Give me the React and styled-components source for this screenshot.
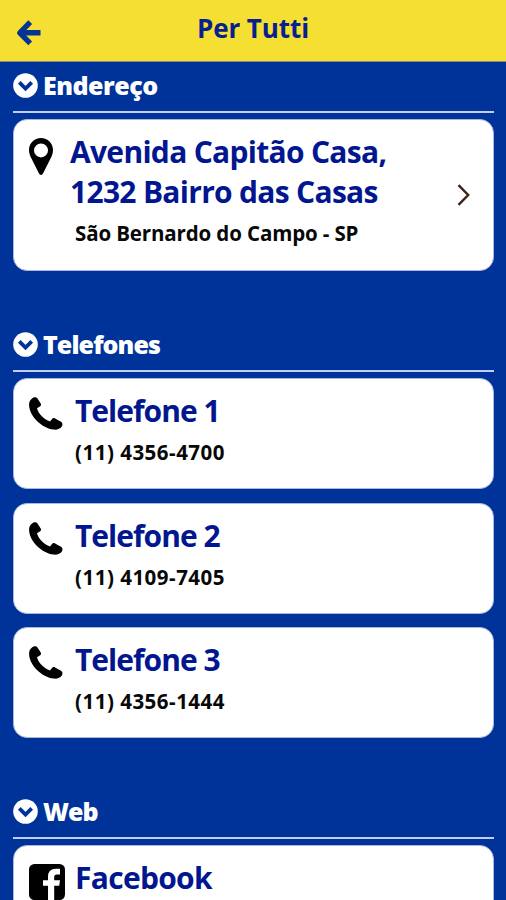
import React from 'react';
import styled, { createGlobalStyle } from 'styled-components';

const GlobalStyle = createGlobalStyle`
  * {
    box-sizing: border-box;
  }
  body {
    margin: 0;
    background-color: #003399;
    font-family: "Open Sans", "Noto Sans", sans-serif;
  }
`

const Aplicativo = styled.div`
  width: 506px;
  height: 900px;
  overflow: hidden;
  background-color: #003399;
`

const Cabecalho = styled.header`
  display: grid;
  grid-template-columns: 50px 1fr 50px;
  height: 62px;
  background-color: #f5df32;
  border-bottom: 1px solid #8b8884;
`

const BotaoVoltar = styled.button`
  display: flex;
  align-items: flex-start;
  padding: 19px 0 0 16px;
  border: none;
  background: none;
`

const TituloPagina = styled.h1`
  margin: 0;
  padding-top: 10px;
  text-align: center;
  font-size: 26px;
  line-height: 36px;
  font-weight: 700;
  letter-spacing: -0.1px;
  color: #06218f;
`

const Secao = styled.section`
  padding: 0 12px 0 13px;
  margin-bottom: 50px;
`

const TopoSecao = styled.div`
  display: flex;
  align-items: flex-start;
  gap: 5px;
  height: 51px;
  padding-top: 11px;
  margin-bottom: 6px;
  border-bottom: 2px solid #c3cdf3;
`

const TituloSecao = styled.h2`
  margin: -5px 0 0;
  font-size: 25px;
  line-height: 34px;
  font-weight: 800;
  white-space: nowrap;
  letter-spacing: ${props => props.$espaco || '0'};
  color: #ffffff;
`

const Lista = styled.div`
  display: flex;
  flex-direction: column;
  gap: 13.5px;
`

const Cartao = styled.article`
  display: flex;
  height: ${props => props.$altura || '111px'};
  padding: 12px 22px 0 15px;
  border: 1px solid #a9b5de;
  border-radius: 14px;
  background-color: #ffffff;
`

const AreaIcone = styled.div`
  flex: none;
  width: ${props => props.$largura || '46px'};
  padding-top: 6px;
`

const Textos = styled.div`
  flex: 1;
`

const TituloCartao = styled.h3`
  margin: 0;
  font-size: 30px;
  line-height: 40px;
  font-weight: 700;
  white-space: nowrap;
  letter-spacing: ${props => props.$espaco || '0'};
  color: #02178f;
`

const Detalhe = styled.p`
  margin: 0;
  padding-left: ${props => props.$recuo || '0'};
  font-size: 20.5px;
  line-height: 42px;
  font-weight: 700;
  white-space: nowrap;
  letter-spacing: ${props => props.$espaco || '0'};
  color: #080808;
`

const AreaSeta = styled.div`
  padding-top: 51px;
`

const Desenho = styled.svg`
  display: block;
`

const IconeVoltar = () => (
  <Desenho width="26" height="28" viewBox="0 0 26 28">
    <path d="M14.2 3.2 L3.8 13.8 L14.2 24.4 M4 13.8 H24.5" fill="none" stroke="#073393" strokeWidth="5.4" strokeLinejoin="round" />
  </Desenho>
)

const IconeSecao = () => (
  <Desenho width="25" height="25" viewBox="0 0 25 25">
    <circle cx="12.5" cy="12.5" r="12.3" fill="#ffffff" />
    <path d="M6.3 9.4 L12.5 15.6 L18.7 9.4" fill="none" stroke="#003399" strokeWidth="3.8" />
  </Desenho>
)

const IconeLocal = () => (
  <Desenho width="24" height="37" viewBox="0 0 24 37">
    <path
      d="M12 0 C5.2 0 0 5.3 0 12 C0 15.2 1 17.5 2.2 20 L10 35.6 C10.8 37.4 13.2 37.4 14 35.6 L21.8 20 C23 17.5 24 15.2 24 12 C24 5.3 18.8 0 12 0 Z M12 5.4 A7 7 0 1 1 12 19.4 A7 7 0 1 1 12 5.4 Z"
      fill="#000000"
      fillRule="evenodd"
    />
  </Desenho>
)

const IconeTelefone = () => (
  <Desenho width="34" height="33" viewBox="0 0 34 33">
    <path
      d="M3 1.6 C4.6 0 7.2 -0.3 8.3 1.2 L11.7 6.6 C12.3 7.7 12.1 8.5 11.2 9.2 L8 11.3 C9.3 16.6 14.8 22.3 21 24.4 L23.4 21.6 C24.2 20.8 25.1 20.8 26.1 21.4 L32.4 25 C33.8 26.1 33.7 28 32.8 29.6 C31 32.2 28 33 24.6 32.6 C13 31 0.8 19.6 0.1 8.4 C-0.1 5.4 1 3.2 3 1.6 Z"
      fill="#000000"
    />
  </Desenho>
)

const IconeFacebook = () => (
  <Desenho width="36" height="36" viewBox="0 0 36 36">
    <rect width="36" height="36" rx="5.5" fill="#000000" />
    <path
      d="M19 36 V21.8 H14 V16.2 H19 V12.6 C19 7.6 22 4.8 26.8 4.8 H31 V10.4 H28 C26 10.4 25.2 11.3 25.2 13 V16.2 H31 L30.2 21.8 H25.2 V36 Z"
      fill="#ffffff"
    />
  </Desenho>
)

const IconeSeta = () => (
  <Desenho width="14" height="24" viewBox="0 0 14 24">
    <path d="M1.5 2.2 L11.2 12 L1.5 21.8" fill="none" stroke="#3d211b" strokeWidth="2.4" />
  </Desenho>
)

const telefones = [
  { titulo: 'Telefone 1', numero: '(11) 4356-4700' },
  { titulo: 'Telefone 2', numero: '(11) 4109-7405' },
  { titulo: 'Telefone 3', numero: '(11) 4356-1444' },
]

const Topo = ({ titulo, espaco }) => (
  <TopoSecao>
    <IconeSecao />
    <TituloSecao $espaco={espaco}>{titulo}</TituloSecao>
  </TopoSecao>
)

class App extends React.Component {
  render() {
    const listaTelefones = telefones.map((telefone) => {
      return (
        <Cartao key={telefone.titulo}>
          <AreaIcone>
            <IconeTelefone />
          </AreaIcone>
          <Textos>
            <TituloCartao $espaco="-1px">{telefone.titulo}</TituloCartao>
            <Detalhe $espaco="0.5px">{telefone.numero}</Detalhe>
          </Textos>
        </Cartao>
      )
    })

    return (
      <Aplicativo>
        <GlobalStyle />
        <Cabecalho>
          <BotaoVoltar aria-label="Voltar">
            <IconeVoltar />
          </BotaoVoltar>
          <TituloPagina>Per Tutti</TituloPagina>
        </Cabecalho>

        <Secao>
          <Topo titulo="Endereço" espaco="-0.5px" />
          <Cartao $altura="152px">
            <AreaIcone $largura="41px">
              <IconeLocal />
            </AreaIcone>
            <Textos>
              <TituloCartao $espaco="-0.7px">
                Avenida Capitão Casa,<br />
                1232 Bairro das Casas
              </TituloCartao>
              <Detalhe $recuo="5px" $espaco="-0.13px">São Bernardo do Campo - SP</Detalhe>
            </Textos>
            <AreaSeta>
              <IconeSeta />
            </AreaSeta>
          </Cartao>
        </Secao>

        <Secao>
          <Topo titulo="Telefones" espaco="-0.9px" />
          <Lista>{listaTelefones}</Lista>
        </Secao>

        <Secao>
          <Topo titulo="Web" espaco="-1px" />
          <Cartao>
            <AreaIcone>
              <IconeFacebook />
            </AreaIcone>
            <Textos>
              <TituloCartao $espaco="-0.7px">Facebook</TituloCartao>
            </Textos>
          </Cartao>
        </Secao>
      </Aplicativo>
    )
  }
}

export default App;
